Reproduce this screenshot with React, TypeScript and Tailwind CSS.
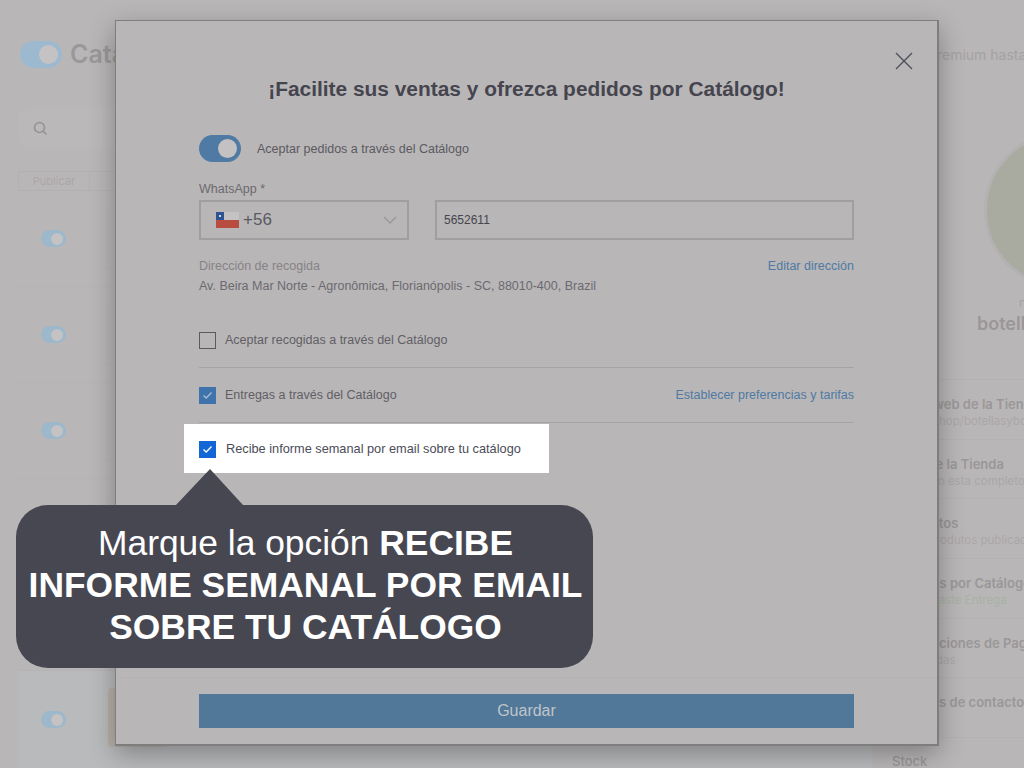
const arial = "font-['Liberation_Sans',sans-serif]";

function Toggle({ big }: { big?: boolean }) {
  return big ? (
    <div className="w-[42px] h-[27px] rounded-full bg-[#4f7aa3] flex items-center justify-end pr-[4px] shrink-0">
      <div className="w-[19px] h-[19px] rounded-full bg-[#c3c1c2]" />
    </div>
  ) : (
    <div className="w-[25px] h-[17px] rounded-full bg-[#9db7cb] flex items-center justify-end pr-[3px] shrink-0">
      <div className="w-[12px] h-[12px] rounded-full bg-[#c4c2c3]" />
    </div>
  );
}

function Check({ color, bright }: { color: string; bright?: boolean }) {
  return (
    <div className={`w-[17px] h-[17px] flex items-center justify-center shrink-0 ${color}`}>
      <svg width="11" height="9" viewBox="0 0 11 9" fill="none">
        <path d="M1.5 4.5 L4.2 7 L9.5 1.5" stroke={bright ? "#ffffff" : "#a9bed2"} strokeWidth="1.3" />
      </svg>
    </div>
  );
}

function Row() {
  return (
    <div className="h-[96px] border-b border-[#b6b3b4] flex items-center pl-[23px]">
      <Toggle />
      <div className="ml-[41px] w-[60px] h-[60px] border border-[#b5b2b3] shrink-0" />
    </div>
  );
}

function SideRow({ title, sub, green, pad }: { title: string; sub?: string; green?: boolean; pad: string }) {
  return (
    <div className={`h-[59.7px] border-b border-[#b4b1b2] pt-[16px] overflow-hidden whitespace-nowrap ${pad}`}>
      <div className="text-[13px] leading-[16px] font-semibold text-[#9a9798]">{title}</div>
      {sub && <div className={`mt-[2px] text-[11.5px] leading-[14px] ${green ? "text-[#a4b3a4]" : "text-[#aaa7a8]"}`}>{sub}</div>}
    </div>
  );
}

export default function App() {
  return (
    <div className="relative w-[1024px] h-[768px] overflow-hidden bg-[#b9b6b7] font-['Inter',sans-serif]">
      {/* Page behind the dimming */}
      <div className="flex w-full h-full">
        <div className="w-[890px] pl-[18px] shrink-0">
          <div className="flex items-center gap-[8px] pt-[41px] pl-[2px]">
            <div className="w-[42px] h-[27px] rounded-full bg-[#9db9cf] flex items-center justify-end pr-[4px]">
              <div className="w-[19px] h-[19px] rounded-full bg-[#c4c2c3]" />
            </div>
            <div className="text-[25px] leading-[27px] font-semibold text-[#9b9899]">Catálogo</div>
          </div>
          <div className="mt-[40px] w-[400px] h-[40px] rounded-[12px] bg-[#bab8b8] flex items-center pl-[15px]">
            <svg width="15" height="15" viewBox="0 0 15 15" fill="none" stroke="#959293" strokeWidth="1.6">
              <circle cx="6.5" cy="6.5" r="5" />
              <path d="M10.2 10.2 L13.5 13.5" />
            </svg>
          </div>
          <div className="mt-[23px] flex h-[20px] w-[200px] border border-[#b3b0b1] text-[11px] leading-[18px] text-[#a9a6a7]">
            <div className="w-[71px] border-r border-[#b3b0b1] text-center">Publicar</div>
          </div>
          <div className="w-[854px]">
            <Row />
            <Row />
            <Row />
            <Row />
            <Row />
            <div className="h-[98px] bg-[#b9babc] flex items-start pt-[17px] pl-[23px]">
              <div className="mt-[23px]">
                <Toggle />
              </div>
              <div className="ml-[42px] w-[60px] h-[59px] rounded-[4px] bg-[#b6b0a7] shrink-0" />
              <div className="ml-[30px] pt-[42px] text-[13px] leading-[16px] text-[#9a9697] whitespace-nowrap">Botella &nbsp; &nbsp; 50,00</div>
            </div>
          </div>
        </div>
        <div className="flex-1 min-w-0">
          <div className="pt-[47px] pl-[38px] text-[14px] leading-[16px] text-[#a5a2a3] whitespace-nowrap overflow-hidden">Premium hasta 30/12</div>
          <div className="mt-[69px] ml-[94px] w-[158px] h-[156px] rounded-full bg-[#a9aba0] border-[3px] border-[#b3b1b1]" />
          <div className="mt-[8px] pl-[129px] text-[12px] leading-[14px] text-[#a5a2a3]">n</div>
          <div className="pl-[87px] text-[18px] leading-[28px] font-semibold text-[#9a9798] whitespace-nowrap">botellas</div>
          <div className="mt-[41px] border-t border-[#b4b1b2]">
            <SideRow pad="pl-[12px]" title="Sitio web de la Tienda" sub=".com/shop/botellasybotellas" />
            <SideRow pad="pl-[10px]" title="Info de la Tienda" sub="Registro esta completo" />
            <SideRow pad="pl-[4px]" title="Productos" sub="Hay 5 produtos publicados" />
            <SideRow pad="pl-[6px]" title="Pedidos por Catálogo" sub="Ya activaste Entrega" green />
            <SideRow pad="pl-[12px]" title="Condiciones de Pago" sub="Activadas" />
            <SideRow pad="pl-[10px]" title="Medios de contacto" />
          </div>
          <div className="pt-[15px] pl-[2px] text-[13px] leading-[16px] font-medium text-[#9a9798]">Stock</div>
        </div>
      </div>

      {/* Modal */}
      <div className={`absolute left-[115px] top-[20px] w-[824px] h-[726px] bg-[#b9b6b7] border border-[#7f7d7e] border-r-2 border-b-2 shadow-[0_8px_24px_rgba(0,0,0,0.3)] ${arial}`}>
        <div className="absolute right-[24px] top-[31px]">
          <svg width="18" height="18" viewBox="0 0 18 18" fill="none" stroke="#4b4e58" strokeWidth="1.3">
            <path d="M1 1 L17 17 M17 1 L1 17" />
          </svg>
        </div>
        <div className="pt-[55px] text-center text-[20.9px] leading-[26px] font-bold text-[#45454f]">¡Facilite sus ventas y ofrezca pedidos por Catálogo!</div>
        <div className="mx-[83px] mt-[33px]">
          <div className="flex items-center gap-[16px] h-[27px]">
            <Toggle big />
            <span className="text-[12.5px] pt-[1px] text-[#5a5a62]">Aceptar pedidos a través del Catálogo</span>
          </div>
          <div className="mt-[20px] text-[12.5px] leading-[14px] text-[#6b6a70]">WhatsApp *</div>
          <div className="mt-[4px] flex gap-[26px]">
            <div className="w-[210px] h-[40px] border-2 border-[#a09e9f] flex items-center pl-[15px]">
              <svg width="23" height="16" viewBox="0 0 23 16">
                <rect width="23" height="8" fill="#c4c2c3" />
                <rect y="8" width="23" height="8" fill="#b84c41" />
                <rect width="8" height="8" fill="#2f5392" />
                <rect x="3" y="3" width="2" height="2" fill="#d8d8d8" />
              </svg>
              <span className="ml-[4px] text-[17px] text-[#5a5a62]">+56</span>
              <svg className="ml-auto mr-[10px]" width="14" height="8" viewBox="0 0 14 8" fill="none" stroke="#9b999a" strokeWidth="1.5">
                <path d="M1 1 L7 7 L13 1" />
              </svg>
            </div>
            <div className="flex-1 h-[40px] border-2 border-[#a09e9f] flex items-center pl-[7px] text-[12px] text-[#45454f]">5652611</div>
          </div>
          <div className="mt-[19px] flex justify-between text-[12.5px] leading-[14px]">
            <span className="text-[#858386]">Dirección de recogida</span>
            <span className="text-[#4f7aa3]">Editar dirección</span>
          </div>
          <div className="mt-[6px] text-[12.5px] leading-[14px] text-[#6b6a70]">Av. Beira Mar Norte - Agronômica, Florianópolis - SC, 88010-400, Brazil</div>
          <div className="mt-[39px] h-[36px] border-b border-[#a5a3a4] flex items-start gap-[9px] text-[12.5px] leading-[17px] text-[#5f5f66]">
            <div className="w-[17px] h-[17px] border-[1.5px] border-[#5a5a5c] shrink-0" />
            Aceptar recogidas a través del Catálogo
          </div>
          <div className="h-[55px] border-b border-[#a5a3a4] flex items-center gap-[9px] text-[12.5px] text-[#5f5f66]">
            <Check color="bg-[#3f73ab]" />
            <span className="flex-1">Entregas a través del Catálogo</span>
            <span className="text-[#4f7aa3]">Establecer preferencias y tarifas</span>
          </div>
        </div>
        <div className="absolute left-[68px] top-[403px] w-[365px] h-[49px] bg-white flex items-center pl-[15px] pt-[1px] gap-[10px] text-[12.75px] text-[#4a4c58]">
          <Check color="bg-[#1366d6]" bright />
          Recibe informe semanal por email sobre tu catálogo
        </div>
        <div className="absolute left-0 right-0 bottom-0 h-[67px] border-t border-[#b5b2b3] px-[83px] pt-[16px]">
          <div className="h-[34px] bg-[#517799] flex items-center justify-center text-[16px] text-[#bfc5ca]">Guardar</div>
        </div>
      </div>

      {/* Callout */}
      <div className="absolute left-[16px] top-[505px] w-[577px] h-[163px] rounded-[32px] bg-[#474752] flex items-center justify-center text-center font-['Liberation_Sans',sans-serif] text-[35.4px] leading-[42px] pb-[4px] pl-[2px] text-white">
        <div>
          Marque la opción <b>RECIBE</b>
          <br />
          <b>INFORME SEMANAL POR EMAIL</b>
          <br />
          <b>SOBRE TU CATÁLOGO</b>
        </div>
      </div>
      <svg className="absolute left-[176px] top-[469px]" width="68" height="37" viewBox="0 0 68 37">
        <path d="M34 0 L67 36 L0 36 Z" fill="#474752" />
      </svg>
    </div>
  );
}
